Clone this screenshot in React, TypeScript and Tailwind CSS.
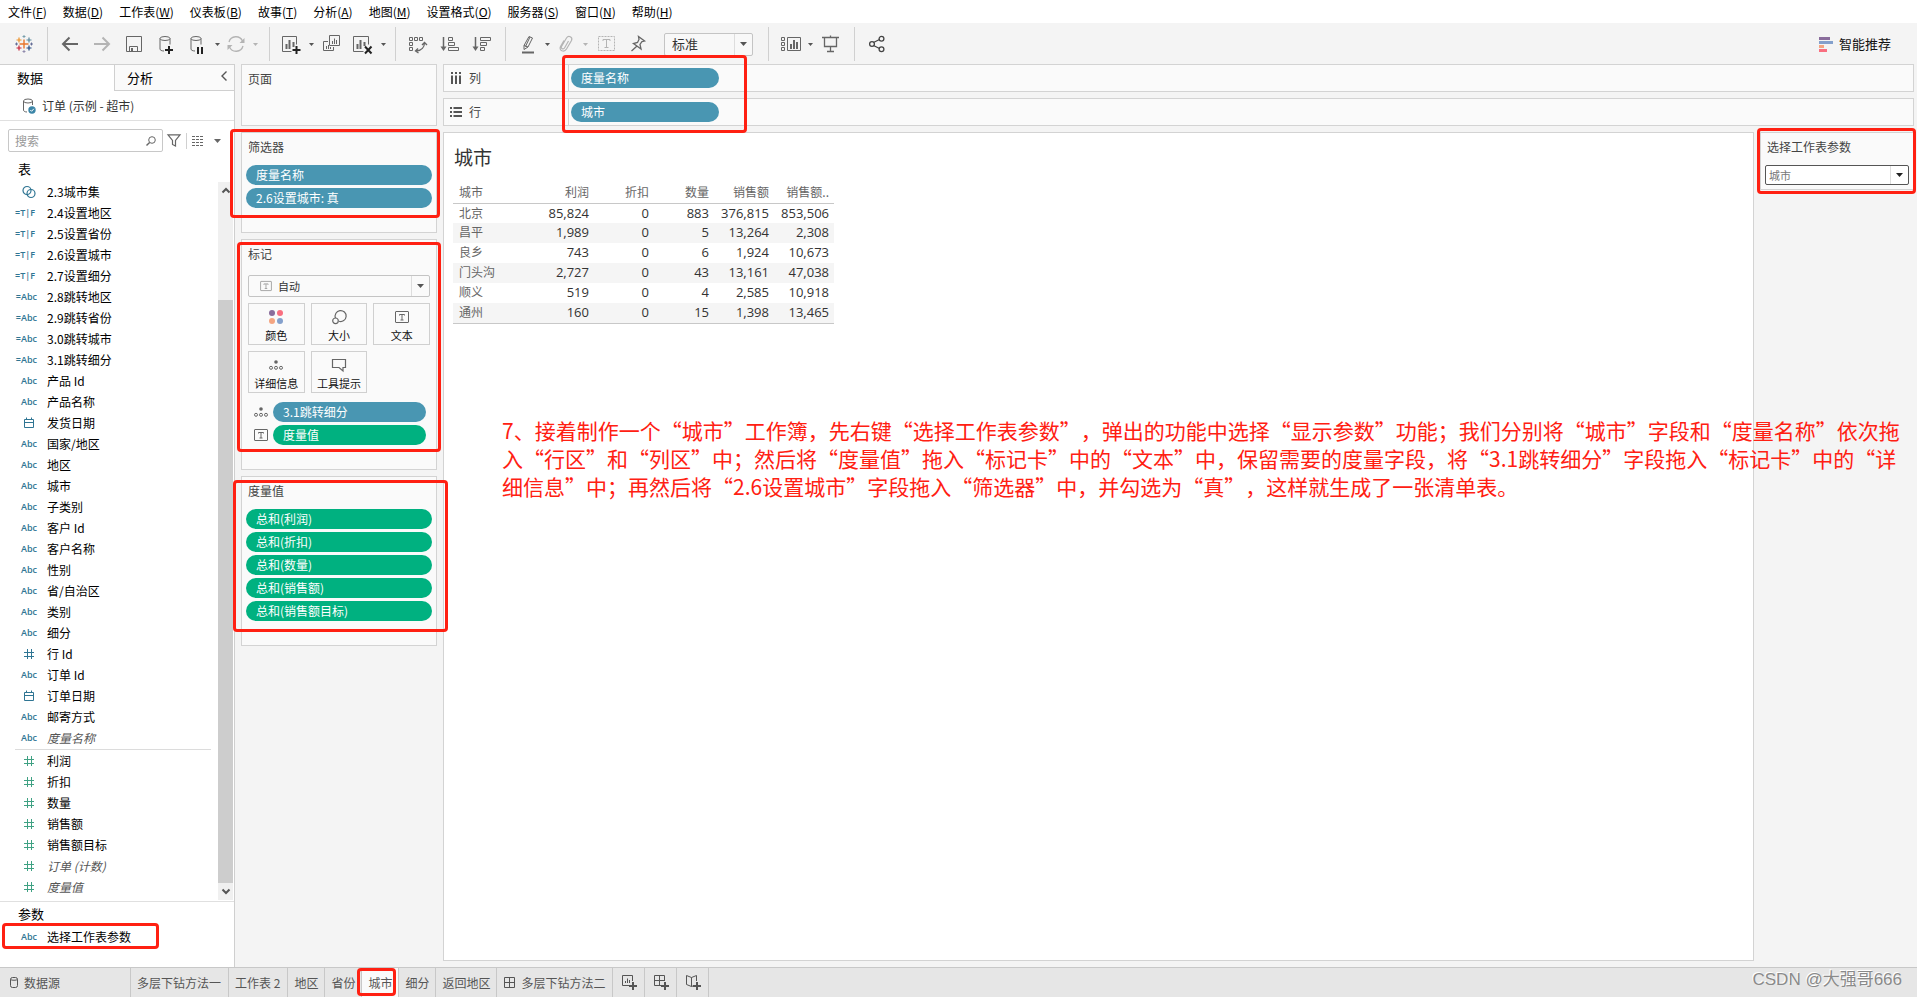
import type { ReactNode } from "react";
import clsx from "clsx";

type FieldKind = "set" | "calcBool" | "calcText" | "text" | "date" | "number";
type Field = { name: string; kind: FieldKind; italic?: boolean };

const menus = [
  ["文件", "F"],
  ["数据", "D"],
  ["工作表", "W"],
  ["仪表板", "B"],
  ["故事", "T"],
  ["分析", "A"],
  ["地图", "M"],
  ["设置格式", "O"],
  ["服务器", "S"],
  ["窗口", "N"],
  ["帮助", "H"],
];

const dimensions: Field[] = [
  { name: "2.3城市集", kind: "set" },
  { name: "2.4设置地区", kind: "calcBool" },
  { name: "2.5设置省份", kind: "calcBool" },
  { name: "2.6设置城市", kind: "calcBool" },
  { name: "2.7设置细分", kind: "calcBool" },
  { name: "2.8跳转地区", kind: "calcText" },
  { name: "2.9跳转省份", kind: "calcText" },
  { name: "3.0跳转城市", kind: "calcText" },
  { name: "3.1跳转细分", kind: "calcText" },
  { name: "产品 Id", kind: "text" },
  { name: "产品名称", kind: "text" },
  { name: "发货日期", kind: "date" },
  { name: "国家/地区", kind: "text" },
  { name: "地区", kind: "text" },
  { name: "城市", kind: "text" },
  { name: "子类别", kind: "text" },
  { name: "客户 Id", kind: "text" },
  { name: "客户名称", kind: "text" },
  { name: "性别", kind: "text" },
  { name: "省/自治区", kind: "text" },
  { name: "类别", kind: "text" },
  { name: "细分", kind: "text" },
  { name: "行 Id", kind: "number" },
  { name: "订单 Id", kind: "text" },
  { name: "订单日期", kind: "date" },
  { name: "邮寄方式", kind: "text" },
  { name: "度量名称", kind: "text", italic: true },
];

const measures: Field[] = [
  { name: "利润", kind: "number" },
  { name: "折扣", kind: "number" },
  { name: "数量", kind: "number" },
  { name: "销售额", kind: "number" },
  { name: "销售额目标", kind: "number" },
  { name: "订单 (计数)", kind: "number", italic: true },
  { name: "度量值", kind: "number", italic: true },
];

const measureValues = ["利润", "折扣", "数量", "销售额", "销售额目标"];

const columns = ["利润", "折扣", "数量", "销售额", "销售额.."];
const rows = [
  ["北京", "85,824", "0", "883", "376,815", "853,506"],
  ["昌平", "1,989", "0", "5", "13,264", "2,308"],
  ["良乡", "743", "0", "6", "1,924", "10,673"],
  ["门头沟", "2,727", "0", "43", "13,161", "47,038"],
  ["顺义", "519", "0", "4", "2,585", "10,918"],
  ["通州", "160", "0", "15", "1,398", "13,465"],
];

const notes = [
  "7、接着制作一个“城市”工作簿，先右键“选择工作表参数”，弹出的功能中选择“显示参数”功能；我们分别将“城市”字段和“度量名称”依次拖",
  "入“行区”和“列区”中；然后将“度量值”拖入“标记卡”中的“文本”中，保留需要的度量字段，将“3.1跳转细分”字段拖入“标记卡”中的“详",
  "细信息”中；再然后将“2.6设置城市”字段拖入“筛选器”中，并勾选为“真”，这样就生成了一张清单表。",
];

/* ---------- shared bits ---------- */

const Icon = ({
  children,
  className = "size-5",
  box = "0 0 20 20",
}: {
  children: ReactNode;
  className?: string;
  box?: string;
}) => (
  <svg
    viewBox={box}
    fill="none"
    stroke="currentColor"
    aria-hidden="true"
    className={clsx("shrink-0 overflow-visible", className)}
  >
    {children}
  </svg>
);

const Caret = ({ className = "h-1 w-[7px]" }: { className?: string }) => (
  <svg
    viewBox="0 0 7 4"
    aria-hidden="true"
    className={clsx("shrink-0 fill-current", className)}
  >
    <path d="M0 0h7L3.500 4z" />
  </svg>
);

const Highlight = ({ className }: { className: string }) => (
  <span
    className={clsx(
      "pointer-events-none absolute z-10 rounded-[4px] border-[3px] border-[#ff2012]",
      className,
    )}
  />
);

const Pill = ({
  children,
  green,
  className,
}: {
  children: ReactNode;
  green?: boolean;
  className?: string;
}) => (
  <div
    className={clsx(
      "h-5 rounded-full pl-2.5 leading-5 text-white",
      green ? "bg-[#00b180]" : "bg-[#4996b2]",
      className,
    )}
  >
    {children}
  </div>
);

const TextMark = ({ className = "h-3 w-3.5" }: { className?: string }) => (
  <Icon box="0 0 14 12" className={className}>
    <rect x="0.5" y="0.5" width="13" height="11" rx="0.5" />
    <path d="M4.500 4.500v-1h5v1M7 3.500v5.500M5.500 9h3" />
  </Icon>
);

const DetailMark = () => (
  <Icon box="0 0 14 10" className="h-2.5 w-3.5">
    <circle cx="7" cy="2" r="1.8" fill="currentColor" stroke="none" />
    <circle cx="2" cy="7.8" r="1.5" />
    <circle cx="7" cy="7.8" r="1.5" />
    <circle cx="12" cy="7.8" r="1.5" />
  </Icon>
);

const SelectArrow = ({ className }: { className: string }) => (
  <span
    className={clsx(
      "pointer-events-none absolute inset-y-px right-px flex w-[18px] items-center justify-center border-l border-[#ddd]",
      className,
    )}
  >
    <Caret />
  </span>
);

/* ---------- toolbar ---------- */

const ToolButton = ({
  label,
  className = "w-8",
  children,
}: {
  label: string;
  className?: string;
  children: ReactNode;
}) => (
  <button
    type="button"
    aria-label={label}
    className={clsx("flex h-8 shrink-0 items-center justify-center", className)}
  >
    {children}
  </button>
);

const ToolCaret = ({ label, muted }: { label: string; muted?: boolean }) => (
  <ToolButton
    label={label}
    className={clsx("w-2.5", muted ? "text-[#b4b4b4]" : "text-[#555]")}
  >
    <Caret className="h-[3px] w-[5px]" />
  </ToolButton>
);

const ToolGroup = ({
  children,
  className = "pr-[7px]",
}: {
  children: ReactNode;
  className?: string;
}) => (
  <div
    className={clsx(
      "flex h-[34px] items-center border-l border-[#d0d0d0] pl-1.5",
      className,
    )}
  >
    {children}
  </div>
);

const Logo = () => (
  <Icon>
    <path d="M10 5.5v9M5.5 10h9" stroke="#e8762c" strokeWidth="1.4" />
    <path d="M5 3.5v5M2.5 6h5" stroke="#eb9129" strokeWidth="1.2" />
    <path d="M15 3.5v5M12.5 6h5" stroke="#59879b" strokeWidth="1.2" />
    <path d="M5 11.5v5M2.5 14h5" stroke="#c72035" strokeWidth="1.2" />
    <path d="M15 11.5v5M12.5 14h5" stroke="#1f447e" strokeWidth="1.2" />
    <path d="M10 1v3M8.5 2.5h3" stroke="#7099a6" strokeWidth="0.9" />
    <path d="M10 16v3M8.5 17.5h3" stroke="#8a84a8" strokeWidth="0.9" />
    <path d="M2.5 8.5v3M1 10h3M17.5 8.5v3M16 10h3" stroke="#5b6591" strokeWidth="0.9" />
  </Icon>
);

const Cylinder = () => (
  <>
    <ellipse cx="9" cy="4.5" rx="5" ry="2" />
    <path d="M4 4.5v10.5c0 1.2 1.6 1.9 4 2M14 4.5v6" />
  </>
);

const Toolbar = () => (
  <div className="flex h-[41px] items-center bg-[#f4f4f4] pt-px text-[#666]">
    <ToolButton label="开始页面" className="w-[47px]">
      <Logo />
    </ToolButton>
    <ToolGroup className="pr-[9px]">
      <ToolButton label="撤消">
        <Icon>
          <path d="M2.5 10H18M9.5 3.5 3 10l6.5 6.5" strokeWidth="2" />
        </Icon>
      </ToolButton>
      <ToolButton label="重做" className="w-8 text-[#b4b4b4]">
        <Icon>
          <path d="M2 10h15.500M10.500 3.500 17 10l-6.500 6.500" strokeWidth="2" />
        </Icon>
      </ToolButton>
      <ToolButton label="保存">
        <Icon>
          <path d="M2.5 2.5h15v15h-15zM5.5 17.5v-5h8v5" />
          <path d="M7 14h2v3H7z" fill="currentColor" stroke="none" />
        </Icon>
      </ToolButton>
      <ToolButton label="新建数据源">
        <Icon>
          <Cylinder />
          <path d="M13 12v8M9 16h8" stroke="#222" strokeWidth="2" />
        </Icon>
      </ToolButton>
      <ToolButton label="暂停自动更新" className="w-[30px]">
        <Icon>
          <Cylinder />
          <path d="M11 13v7M15 13v7" stroke="#222" strokeWidth="2" />
        </Icon>
      </ToolButton>
      <ToolCaret label="更新选项" />
      <ToolButton label="运行更新" className="w-7 text-[#b4b4b4]">
        <Icon>
          <path
            d="M3 8A7.200 7.200 0 0 1 16.500 7M17 12A7.200 7.200 0 0 1 3.500 13"
            strokeWidth="1.3"
          />
          <path
            d="M18.500 4v5h-5zM1.500 16v-5h5z"
            fill="currentColor"
            stroke="none"
          />
        </Icon>
      </ToolButton>
      <ToolCaret label="刷新选项" muted />
    </ToolGroup>
    <ToolGroup>
      <ToolButton label="新建工作表" className="w-[30px]">
        <Icon>
          <path d="M10.500 17.500h-9v-15h14v8" />
          <path d="M5.500 10v5M8.500 6v9M12.500 8v5" strokeWidth="2" />
          <path d="M15.500 12v8M11.500 16h8" stroke="#222" strokeWidth="2" />
        </Icon>
      </ToolButton>
      <ToolCaret label="新建选项" />
      <ToolButton label="复制">
        <Icon>
          <path d="M7.500 1.500h10v10h-10zM6 7.500H1.500v9h10V13" />
          <path d="M10.500 7v3M12.500 4.500V10M14.500 6v4M4.500 12v3M6.500 11v4M8.500 13v2" />
        </Icon>
      </ToolButton>
      <ToolButton label="清除工作表" className="w-[30px]">
        <Icon>
          <path d="M10.500 17.500h-10v-15h15v8" />
          <path d="M4.500 10v5M7.500 6v9M11.500 8v4" strokeWidth="2" />
          <path d="m12 12.500 6.500 7M18.500 12.500l-6.500 7" stroke="#222" strokeWidth="2" />
        </Icon>
      </ToolButton>
      <ToolCaret label="清除选项" />
    </ToolGroup>
    <ToolGroup>
      <ToolButton label="交换行和列">
        <Icon>
          <path d="M1.500 3.500h3v3h-3zM6.500 3.500h3v3h-3zM11.500 3.500h3v3h-3zM1.500 8.500h3v3h-3zM1.500 13.500h3v3h-3z" />
          <path
            d="M16.500 8.500c0 4.500-3 8-8 8.500M14 11l2.500-2.500L19 11M10 14.500 7.500 17l3 2"
            strokeWidth="1.3"
          />
        </Icon>
      </ToolButton>
      <ToolButton label="升序排序">
        <Icon>
          <path d="M3.500 3v12" strokeWidth="1.5" />
          <path d="M.5 12.500h6l-3 4.500z" fill="currentColor" stroke="none" />
          <path d="M8.500 3.500h4v3h-4zM8.500 8.500h6v3h-6zM8.500 13.500h10v3h-10z" />
        </Icon>
      </ToolButton>
      <ToolButton label="降序排序">
        <Icon>
          <path d="M3.500 3v12" strokeWidth="1.5" />
          <path d="M.5 12.500h6l-3 4.500z" fill="currentColor" stroke="none" />
          <path d="M8.500 3.500h10v3h-10zM8.500 8.500h6v3h-6zM8.500 13.500h4v3h-4z" />
        </Icon>
      </ToolButton>
    </ToolGroup>
    <ToolGroup>
      <ToolButton label="突出显示" className="w-[30px]">
        <Icon>
          <path d="m7 11.500 5-9 3.500 1.500-4.500 9-4 2.500zM7 11.500l4 1.500M13 3l-4.500 9.500" />
          <path d="M5 18.500h12" strokeWidth="2" />
        </Icon>
      </ToolButton>
      <ToolCaret label="突出显示选项" />
      <ToolButton label="组成员" className="w-7 text-[#b4b4b4]">
        <Icon>
          <path
            d="m12.500 7-4 7c-1.500 2-4 .5-3-1.500l5-8.500c2-3 6.500-1 5 2.500l-5 8.500c-2.500 4-8 1.500-6-2.500l3.500-6"
            strokeWidth="1.2"
          />
        </Icon>
      </ToolButton>
      <ToolCaret label="组选项" muted />
      <ToolButton label="显示标记标签" className="w-8 text-[#b4b4b4]">
        <Icon>
          <rect x="2.5" y="2.5" width="16" height="14" strokeDasharray="2 1" />
          <path d="M7 7V5.500h7V7M10.500 5.500v8M8.500 13.500h4" />
        </Icon>
      </ToolButton>
      <ToolButton label="固定轴" className="w-[30px]">
        <Icon>
          <path
            d="m11.500 2.500 6 4.500-2.500.5-2 3 1 4.500-7.500-5.500 4-1 1.500-3zM9.500 12.500l-5 4.500"
            strokeWidth="1.3"
          />
        </Icon>
      </ToolButton>
      <div className="relative mr-2 ml-3 text-[13px] text-[#333]">
        <select
          aria-label="适合"
          className="block h-[23px] w-[89px] appearance-none rounded-xs border border-[#c4c4c4] bg-[#f8f8f8] pl-[7px] leading-5"
        >
          <option>标准</option>
        </select>
        <SelectArrow className="text-[#555]" />
      </div>
    </ToolGroup>
    <ToolGroup>
      <ToolButton label="显示/隐藏卡" className="w-[30px]">
        <Icon>
          <path d="M1.500 3.500h3v3h-3zM1.500 8.500h3v3h-3zM1.500 13.500h3v3h-3zM7.500 3.500h13v13h-13z" />
          <path d="M11 10v5M14 6v9M17 8v7" strokeWidth="2" />
        </Icon>
      </ToolButton>
      <ToolCaret label="卡选项" />
      <ToolButton label="演示模式">
        <Icon>
          <path
            d="M1 3.500h17M3.500 3.500v9h12v-9M9.500 1.500v2M9.500 12.500v5M6 17.500h7"
            strokeWidth="1.3"
          />
        </Icon>
      </ToolButton>
    </ToolGroup>
    <ToolGroup>
      <ToolButton label="共享工作簿" className="w-8 text-[#444]">
        <Icon>
          <path d="m6.500 8.500 6-3M6.500 11.500l6 3" strokeWidth="1.3" />
          <circle cx="5" cy="10" r="2.4" strokeWidth="1.3" />
          <circle cx="14.5" cy="4.8" r="2.4" strokeWidth="1.3" />
          <circle cx="14.5" cy="15.2" r="2.4" strokeWidth="1.3" />
        </Icon>
      </ToolButton>
    </ToolGroup>
    <button
      type="button"
      className="mr-[26px] ml-auto flex items-center gap-1.5 text-[13px] leading-5 text-[#111]"
    >
      <svg viewBox="0 0 14 15" className="h-[15px] w-3.5" aria-hidden="true">
        <path d="M0 0h11v3H0z" fill="#8a6d9c" />
        <path d="M0 4h14v3H0z" fill="#84a0cc" />
        <path d="M0 8h5v3H0z" fill="#f4a582" />
        <path d="M0 12h8v3H0z" fill="#f96f80" />
      </svg>
      智能推荐
    </button>
  </div>
);

/* ---------- data pane ---------- */

const FieldIcon = ({ kind }: { kind: FieldKind }) => {
  if (kind === "set")
    return (
      <Icon box="0 0 16 14" className="h-3.5 w-4">
        <circle cx="6" cy="5.5" r="4" strokeWidth="1.2" />
        <circle cx="10" cy="8.5" r="4" strokeWidth="1.2" />
      </Icon>
    );
  if (kind === "date")
    return (
      <Icon box="0 0 16 12" className="h-3 w-4">
        <path d="M3.500 2.500h9v8h-9zM3.500 5.500h9M5.500.5v2M10.500.5v2" />
      </Icon>
    );
  if (kind === "number")
    return (
      <Icon box="0 0 16 12" className="h-3 w-4">
        <path d="M6.500 1v10M10.500 1v10M3 4.500h10M3 8.500h10" />
      </Icon>
    );
  if (kind === "calcBool") return <span className="pr-0.5">=T|F</span>;
  return <span>{kind === "calcText" ? "=Abc" : "Abc"}</span>;
};

const FieldRow = ({ field, green }: { field: Field; green?: boolean }) => (
  <li className="flex h-[21px] items-center gap-2.5 pl-3.5 leading-[21px]">
    <span
      className={clsx(
        "flex w-[23px] shrink-0 justify-end font-['Open_Sans',sans-serif] text-[9px] font-semibold whitespace-nowrap",
        green ? "text-[#3fa183]" : "text-[#2f7593]",
      )}
    >
      <FieldIcon kind={field.kind} />
    </span>
    <span className={field.italic ? "text-[#555] italic" : "text-black"}>
      {field.name}
    </span>
  </li>
);

const DataPane = () => (
  <aside className="flex w-[235px] shrink-0 flex-col border-r border-[#cfcfcf] bg-white">
    <div className="flex h-[27px] text-[13px] leading-6 text-black">
      <button type="button" className="w-[114px] border-t border-[#d0d0d0] pl-[17px] text-left">
        数据
      </button>
      <div className="flex flex-1 items-center justify-between border border-r-0 border-[#d0d0d0] bg-[#fafafa] pr-[7px] pl-3">
        <button type="button">分析</button>
        <button type="button" aria-label="折叠数据窗格" className="text-[#555]">
          <Icon box="0 0 6 10" className="mb-1 h-2.5 w-1.5">
            <path d="M5.500.5 1 5l4.500 4.500" strokeWidth="1.4" />
          </Icon>
        </button>
      </div>
    </div>
    <div className="flex h-[30px] items-center gap-1.5 border-b border-[#e0e0e0] pl-[22px] text-[#333]">
      <Icon box="0 0 14 16" className="h-4 w-3.5 text-[#666]">
        <ellipse cx="6" cy="3" rx="4.5" ry="2" />
        <path d="M1.500 3v9c0 1.200 1.200 1.900 3.500 2M10.500 3v4" />
        <circle cx="10" cy="12" r="3.7" fill="#3c86a8" stroke="none" />
        <path d="m8.300 12 1.300 1.300 2.200-2.500" stroke="#fff" />
      </Icon>
      订单 (示例 - 超市)
    </div>
    <div className="mt-2 flex h-[23px] items-center pl-2 text-[#666]">
      <div className="flex h-full w-[155px] items-center rounded-xs border border-[#c8c8c8] px-1.5">
        <input
          type="text"
          aria-label="搜索字段"
          placeholder="搜索"
          className="w-full min-w-0 outline-none placeholder:text-[#999]"
        />
        <Icon box="0 0 10 10" className="size-2.5">
          <circle cx="6" cy="4" r="3.3" />
          <path d="M3.600 6.400.5 9.500" strokeWidth="1.4" />
        </Icon>
      </div>
      <button type="button" aria-label="筛选字段" className="ml-1">
        <Icon box="0 0 14 13" className="h-[13px] w-3.5">
          <path d="M1 .8h12L8.500 6.500v5.500l-3-1.500v-4z" strokeWidth="1.2" />
        </Icon>
      </button>
      <span className="mx-[5px] h-4 w-px bg-[#d0d0d0]" />
      <button type="button" aria-label="视图选项" className="flex items-center gap-2.5">
        <Icon box="0 0 12 10" className="h-2.5 w-3">
          <path
            d="M0 .5h12M0 3.500h12M0 6.500h12M0 9.500h12"
            strokeDasharray="3 1"
            strokeWidth="1"
          />
        </Icon>
        <Caret />
      </button>
    </div>
    <h2 className="h-[30px] pt-[5px] pl-[18px] text-[13px] leading-6 text-black">表</h2>
    <div className="flex justify-between border-b border-[#e0e0e0] pb-px">
      <div className="w-[211px] pb-[3px]">
        <ul className="-mt-px pb-px">
          {dimensions.map((field) => (
            <FieldRow key={field.name} field={field} />
          ))}
        </ul>
        <hr className="ml-[15px] border-[#dcdcdc]" />
        <ul>
          {measures.map((field) => (
            <FieldRow key={field.name} field={field} green />
          ))}
        </ul>
      </div>
      <div className="mr-px flex w-[15px] flex-col bg-[#f0f0f0] text-[#555]">
        <button type="button" aria-label="向上滚动" className="flex h-[17px] items-center justify-center">
          <Icon box="0 0 8 5" className="h-[5px] w-2">
            <path d="M.5 4.500 4 1l3.500 3.500" strokeWidth="2" />
          </Icon>
        </button>
        <div className="mt-[101px] flex-1 bg-[#cdcdcd]" />
        <button type="button" aria-label="向下滚动" className="flex h-[17px] items-center justify-center">
          <Icon box="0 0 8 5" className="h-[5px] w-2">
            <path d="M.5.5 4 4 7.500.5" strokeWidth="2" />
          </Icon>
        </button>
      </div>
    </div>
    <h2 className="pl-[18px] text-[13px] leading-6 text-black">参数</h2>
    <ul className="relative">
      <FieldRow field={{ name: "选择工作表参数", kind: "text" }} />
      <Highlight className="-top-[3px] left-0.5 h-[26px] w-[157px]" />
    </ul>
  </aside>
);

/* ---------- cards ---------- */

const Card = ({
  title,
  className,
  children,
}: {
  title: ReactNode;
  className?: string;
  children?: ReactNode;
}) => (
  <section className={clsx("relative border border-[#d3d3d3] bg-[#fafafa] px-1 pt-0.5", className)}>
    <h3 className="pb-px pl-0.5 leading-6 text-[#444]">{title}</h3>
    {children}
  </section>
);

const MarkButton = ({ label, children }: { label: string; children: ReactNode }) => (
  <button
    type="button"
    className="flex h-[42px] flex-col items-center border border-[#d0d0d0] text-[11px] leading-[18px] whitespace-nowrap text-[#111]"
  >
    <span className="flex h-[23px] items-center pt-1 text-[#666]">{children}</span>
    {label}
  </button>
);

const Cards = () => (
  <aside className="flex w-[208px] shrink-0 flex-col gap-1.5 px-1.5">
    <Card title="页面" className="min-h-[62px]" />
    <Card title="筛选器" className="min-h-[101px]">
      <div className="mt-[5px] flex flex-col gap-[3px]">
        <Pill>度量名称</Pill>
        <Pill>2.6设置城市: 真</Pill>
      </div>
      <Highlight className="-top-1 -left-3 h-[89px] w-[210px]" />
    </Card>
    <Card title="标记" className="min-h-[231px]">
      <div className="px-0.5">
        <div className="relative mt-2 text-[11px] text-[#333]">
          <select
            aria-label="标记类型"
            className="block h-[22px] w-full appearance-none rounded-xs border border-[#c4c4c4] bg-[#fafafa] pl-[29px] leading-5"
          >
            <option>自动</option>
          </select>
          <TextMark className="pointer-events-none absolute top-1.5 left-3 h-2.5 w-3 text-[#999]" />
          <SelectArrow className="text-[#555]" />
        </div>
        <div className="mt-1.5 grid grid-cols-3 gap-1.5">
          <MarkButton label="颜色">
            <svg viewBox="0 0 14 14" className="size-3.5" aria-hidden="true">
              <circle cx="3" cy="3" r="3" fill="#8a6d9c" />
              <circle cx="11" cy="3" r="3" fill="#f96f80" />
              <circle cx="3" cy="11" r="3" fill="#f4a582" />
              <circle cx="11" cy="11" r="3" fill="#84a0cc" />
            </svg>
          </MarkButton>
          <MarkButton label="大小">
            <Icon box="0 0 14 14" className="size-3.5">
              <path d="M3.500 8A5.500 5.500 0 1 1 7 11.300" strokeWidth="1.2" />
              <circle cx="3.5" cy="10.8" r="2.8" strokeWidth="1.2" />
            </Icon>
          </MarkButton>
          <MarkButton label="文本">
            <TextMark />
          </MarkButton>
          <MarkButton label="详细信息">
            <DetailMark />
          </MarkButton>
          <MarkButton label="工具提示">
            <Icon box="0 0 14 12" className="h-3 w-3.5">
              <path d="M.5.5h13v8h-2.500v3.500l-4-3.500H.5z" strokeWidth="1.2" />
            </Icon>
          </MarkButton>
        </div>
      </div>
      <div className="mt-[9px] flex flex-col gap-[3px] pr-1.5 pl-2 text-[#666]">
        <div className="flex items-center gap-[5px]">
          <DetailMark />
          <Pill className="flex-1">3.1跳转细分</Pill>
        </div>
        <div className="flex items-center gap-[5px]">
          <TextMark />
          <Pill green className="flex-1">
            度量值
          </Pill>
        </div>
      </div>
      <Highlight className="top-0.5 -left-[5px] h-[210px] w-[204px]" />
    </Card>
    <Card title="度量值" className="min-h-[170px]">
      <div className="mt-[5px] flex flex-col gap-[3px]">
        {measureValues.map((name) => (
          <Pill key={name} green>
            总和({name})
          </Pill>
        ))}
      </div>
      <Highlight className="top-[3px] -left-[9px] h-[152px] w-[215px]" />
    </Card>
  </aside>
);

/* ---------- worksheet ---------- */

const Shelf = ({ title, icon, field }: { title: string; icon: ReactNode; field: string }) => (
  <div className="flex h-7 border border-[#d3d3d3] bg-[#fafafa]">
    <div className="flex w-[125px] items-center gap-[7px] border-r border-[#d3d3d3] pl-1.5 text-[#444]">
      {icon}
      {title}
    </div>
    <Pill className="mt-[3px] ml-0.5 w-[148px]">{field}</Pill>
  </div>
);

const Crosstab = () => (
  <table className="mt-[11px] w-[381px] table-fixed border-b border-[#c8c8c8] text-[#666]">
    <thead>
      <tr className="h-[21px] border-b border-[#c8c8c8]">
        <th className="w-[81px] pl-1.5 text-left leading-5 font-normal">城市</th>
        {columns.map((name) => (
          <th
            key={name}
            className="w-[60px] pr-[5px] text-right leading-5 font-normal whitespace-nowrap"
          >
            {name}
          </th>
        ))}
      </tr>
    </thead>
    <tbody>
      {rows.map(([city, ...values]) => (
        <tr key={city} className="h-5 align-top even:bg-[#f5f5f5]">
          <td className="pl-1.5 leading-[18px]">{city}</td>
          {values.map((value, index) => (
            <td
              key={index}
              className="pr-[5px] text-right font-['Open_Sans',sans-serif] text-[13px] leading-[18px] text-[#333]"
            >
              {value}
            </td>
          ))}
        </tr>
      ))}
    </tbody>
  </table>
);

const Worksheet = () => (
  <main className="relative flex min-w-0 flex-1 flex-col gap-1.5 pr-[3px] pb-1.5">
    <Shelf
      title="列"
      field="度量名称"
      icon={
        <Icon box="0 0 12 12" className="size-3 text-[#555]">
          <path d="M2 0v2M6 0v2M10 0v2M2 3.500V12M6 3.500V12M10 3.500V12" strokeWidth="2" />
        </Icon>
      }
    />
    <Shelf
      title="行"
      field="城市"
      icon={
        <Icon box="0 0 12 12" className="size-3 text-[#555]">
          <path d="M0 2h2M0 6h2M0 10h2M3.500 2H12M3.500 6H12M3.500 10H12" strokeWidth="2" />
        </Icon>
      }
    />
    <Highlight className="-top-[9px] left-[119px] h-[78px] w-[185px]" />
    <div className="flex flex-1 gap-1.5">
      <section className="min-w-0 flex-1 border border-[#d3d3d3] bg-white pt-2.5 pl-[9px]">
        <h1 className="pl-px text-[19px] leading-7 text-[#333]">城市</h1>
        <Crosstab />
      </section>
      <aside className="w-[154px] shrink-0">
        <Card
          title={<label htmlFor="sheet-param">选择工作表参数</label>}
          className="h-[58px]"
        >
          <div className="relative mt-[5px] text-[11px] text-[#777]">
            <select
              id="sheet-param"
              className="block h-5 w-full appearance-none rounded-xs border border-[#555] bg-white pl-[3px] leading-4"
            >
              <option>城市</option>
            </select>
            <SelectArrow className="text-[#222]" />
          </div>
          <Highlight className="-top-[5px] -left-1 h-[66px] w-[159px]" />
        </Card>
      </aside>
    </div>
    <p className="pointer-events-none absolute top-[352px] left-[59px] z-10 text-[21px] leading-7 whitespace-nowrap text-[#ff2012] [text-spacing-trim:space-all]">
      {notes.map((line) => (
        <span key={line} className="block">
          {line}
        </span>
      ))}
    </p>
  </main>
);

/* ---------- sheet tabs ---------- */

const SheetTab = ({
  children,
  active,
  className = "px-1.5",
  label,
}: {
  children: ReactNode;
  active?: boolean;
  className?: string;
  label?: string;
}) => (
  <button
    type="button"
    aria-label={label}
    className={clsx(
      "relative flex items-center gap-1.5 border-r border-[#c8c8c8]",
      active && "bg-[#fafafa]",
      className,
    )}
  >
    {children}
  </button>
);

const GridIcon = () => (
  <Icon box="0 0 11 11" className="size-[11px]">
    <path d="M.5.5h10v10H.5zM5.500.5v10M.5 5.500h10" />
  </Icon>
);

const SheetTabs = () => (
  <footer className="flex h-[30px] border-t border-[#c8c8c8] bg-[#e6e6e6] text-[#555]">
    <SheetTab className="w-[131px] pl-2.5">
      <Icon box="0 0 8 11" className="h-[11px] w-2">
        <rect x="0.5" y="0.5" width="7" height="10" rx="2" />
        <path d="M.5 2.500c1 1 6 1 7 0" />
      </Icon>
      数据源
    </SheetTab>
    <SheetTab className="pr-[7px] pl-1.5">多层下钻方法一</SheetTab>
    <SheetTab className="pr-[7px] pl-1.5">工作表 2</SheetTab>
    <SheetTab>地区</SheetTab>
    <SheetTab>省份</SheetTab>
    <SheetTab active>
      城市
      <Highlight className="top-0 right-0.5 bottom-px -left-[5px]" />
    </SheetTab>
    <SheetTab>细分</SheetTab>
    <SheetTab>返回地区</SheetTab>
    <SheetTab className="px-[7px]">
      <GridIcon />
      多层下钻方法二
    </SheetTab>
    <SheetTab label="新建工作表" className="w-8 pl-[9px]">
      <Icon box="0 0 15 15" className="size-[15px]">
        <path d="M7 10.500H.5V.5h10V6M3.500 6v2M5.500 3.500V8M7.500 5v3" />
        <path d="M11 7v8M7 11h8" strokeWidth="2" />
      </Icon>
    </SheetTab>
    <SheetTab label="新建仪表板" className="w-8 pl-[9px]">
      <Icon box="0 0 15 15" className="size-[15px]">
        <path d="M7 10.500H.5V.5h10V6M5.500.5v10M.5 5.500h10" />
        <path d="M11 7v8M7 11h8" strokeWidth="2" />
      </Icon>
    </SheetTab>
    <SheetTab label="新建故事" className="w-8 pl-[9px]">
      <Icon box="0 0 15 15" className="size-[15px]">
        <path d="M5.500 2.500v9L.5 9.500v-9l5 2 5-2V6M5.500 11.500 7 11" />
        <path d="M11 7v8M7 11h8" strokeWidth="2" />
      </Icon>
    </SheetTab>
    <span className="mr-[15px] ml-auto font-['Liberation_Sans','Noto_Sans_CJK_SC',sans-serif] text-[17px] leading-6 text-[#8a8a8a] [text-shadow:-1px_-1px_0_#fff]">
      CSDN @大强哥666
    </span>
  </footer>
);

export default function App() {
  return (
    <div className="flex min-h-screen flex-col overflow-x-hidden bg-[#f4f4f4] font-['Noto_Sans_CJK_SC',sans-serif] text-xs">
      <nav className="flex h-[23px] items-center gap-4 bg-white pt-px pl-2 text-black">
        {menus.map(([name, key]) => (
          <button key={key} type="button" className="whitespace-nowrap">
            {name}(<u>{key}</u>)
          </button>
        ))}
      </nav>
      <Toolbar />
      <div className="flex flex-1">
        <DataPane />
        <Cards />
        <Worksheet />
      </div>
      <SheetTabs />
    </div>
  );
}
